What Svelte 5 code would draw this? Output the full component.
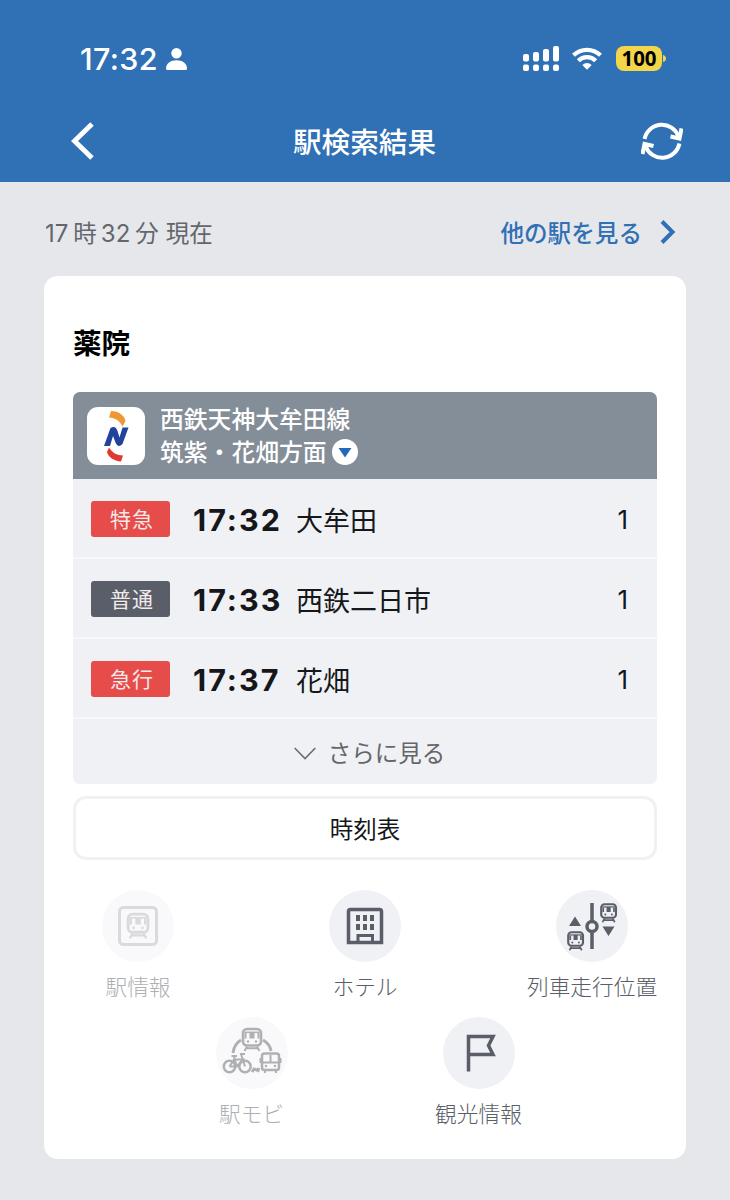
<script>
    const departures = [
        { kind: '特急', express: true, time: '17:32', dest: '大牟田', platform: '1' },
        { kind: '普通', express: false, time: '17:33', dest: '西鉄二日市', platform: '1' },
        { kind: '急行', express: true, time: '17:37', dest: '花畑', platform: '1' }
    ];

    const menu = [
        { id: 'station', label: '駅情報', disabled: true },
        { id: 'hotel', label: 'ホテル' },
        { id: 'position', label: '列車走行位置' },
        { id: 'mobi', label: '駅モビ', disabled: true },
        { id: 'sightseeing', label: '観光情報' }
    ];
</script>

{#snippet train()}
    <rect x="1.5" y="1.5" width="18" height="16.5" rx="4" fill="none" stroke="currentColor" stroke-width="2.6" />
    <path d="M3 4.800H18" stroke="currentColor" stroke-width="1.500" />
    <path d="M3 5.500h2v5.500h-2zM8 5h5v6h-5zM16 5.500h2v5.500h-2z" fill="currentColor" />
    <circle cx="6.500" cy="14" r="1.200" fill="currentColor" />
    <circle cx="14.500" cy="14" r="1.200" fill="currentColor" />
    <path d="M5.500 19 3 23.500M15.500 19 18 23.500M5 20.800h11" fill="none" stroke="currentColor" stroke-width="2" />
{/snippet}

<div class="app">
    <header>
        <div class="status">
            <div class="clock">
                <span>17:32</span>
                <svg width="21" height="22" viewBox="0 0 21 22" fill="#fff">
                    <circle cx="10.5" cy="5.2" r="5.2" />
                    <path d="M0 20.5C0 15.5 4.500 12.300 10.500 12.300S21 15.500 21 20.500Q21 22 19.500 22H1.500Q0 22 0 20.500Z" />
                </svg>
            </div>
            <div class="indicators">
                <svg width="36" height="26" viewBox="0 0 36 26" fill="#fff">
                    <rect x="0" y="8" width="6" height="7.500" rx="2" />
                    <rect x="10" y="6" width="6" height="9.500" rx="2" />
                    <rect x="20" y="3" width="6" height="12.500" rx="2" />
                    <rect x="30" y="0" width="6" height="15.500" rx="2" />
                    <rect x="0" y="18.500" width="6" height="6.500" rx="2" />
                    <rect x="10" y="18.500" width="6" height="6.500" rx="2" />
                    <rect x="20" y="18.500" width="6" height="6.500" rx="2" />
                    <rect x="30" y="18.500" width="6" height="6.500" rx="2" />
                </svg>
                <svg class="wifi" width="30" height="23" viewBox="0 0 30 23" fill="none" stroke="#fff">
                    <path d="M1.500 8.300A19.300 19.300 0 0 1 28.500 8.300" stroke-width="4.200" />
                    <path d="M6.300 13.800A12.200 12.200 0 0 1 23.700 13.800" stroke-width="4.200" />
                    <path d="M15 22.800 10.300 18Q15 14.100 19.700 18Z" fill="#fff" stroke="none" />
                </svg>
                <div class="battery">100</div>
                <svg class="tip" width="3" height="7" viewBox="0 0 3 7"><path d="M0 0Q3 1 3 3.500T0 7Z" fill="#f3d54a" /></svg>
            </div>
        </div>
        <nav>
            <svg width="24" height="38" viewBox="0 0 24 38" fill="none" stroke="#fff" stroke-width="5">
                <path d="M21 2 3.500 19 21 36" />
            </svg>
            <h1>駅検索結果</h1>
            <svg width="42" height="42" viewBox="0 0 42 42" fill="none" stroke="#fff" stroke-width="4">
                <path d="M3.600 19A17.600 17.600 0 0 1 37.500 16.500" />
                <path d="M38.400 23.500A17.600 17.600 0 0 1 4.500 26" />
                <path d="M29.500 16.500 38.500 18.500 40.500 8.500" />
                <path d="M12.500 26 3.500 24 1.500 34" />
            </svg>
        </nav>
    </header>

    <div class="info">
        <span class="now">17<i>時</i>32<i>分</i><b>現在</b></span>
        <span class="other">
            他の駅を見る
            <svg width="16" height="24" viewBox="0 0 16 24" fill="none" stroke="#3070b5" stroke-width="4">
                <path d="M2 1.500 12.500 12 2 22.500" />
            </svg>
        </span>
    </div>

    <main class="card">
        <h2>薬院</h2>
        <section class="line">
            <div class="line-head">
                <svg class="logo" width="58" height="58" viewBox="0 0 58 58">
                    <rect width="58" height="58" rx="11" fill="#fff" />
                    <path d="M24 4C32 4 38 9 38.500 14L35.500 19.500C33 13.500 28 11 22 10.500Z" fill="#ee9734" />
                    <path d="M22 40.500C25 45.500 30 48.500 36 48.500L34 54.500C27 54 21 50 20 45Z" fill="#e0392f" />
                    <path d="M17 39 23.500 21Q28.500 18 30.500 24L32.500 30.500 35.500 20.500H41.500L35.500 37Q31 41.500 28.500 35.500L26 29 23 39Z" fill="#20439b" />
                </svg>
                <div class="line-name">
                    <div>西鉄天神大牟田線</div>
                    <div class="direction">
                        筑紫・花畑方面
                        <svg width="26" height="26" viewBox="0 0 26 26">
                            <circle cx="13" cy="13" r="13" fill="#fff" />
                            <path d="M6.500 9H19.500L13 18.500Z" fill="#2468bc" />
                        </svg>
                    </div>
                </div>
            </div>
            {#each departures as train}
                <div class="row">
                    <span class="kind" class:express={train.express}>{train.kind}</span>
                    <span class="time">{train.time}</span>
                    <span class="dest">{train.dest}</span>
                    <span class="platform">{train.platform}</span>
                </div>
            {/each}
            <div class="more">
                <svg width="22" height="13" viewBox="0 0 22 13" fill="none" stroke="#6b7076" stroke-width="1.700">
                    <path d="M.7 1 11 11.500 21.300 1" />
                </svg>
                <span>さらに見る</span>
            </div>
        </section>
        <button class="timetable">時刻表</button>
        <div class="menu">
            {#each menu as item}
                <div class="item {item.id}" class:disabled={item.disabled}>
                    <svg width="72" height="72" viewBox="0 0 72 72">
                        <circle cx="36" cy="36" r="36" class="disc" />
                        {#if item.id === 'station'}
                            <rect x="17.500" y="17.500" width="37" height="37" rx="4" fill="none" stroke="currentColor" stroke-width="3" />
                            <g transform="translate(24.500 22.500) scale(1.100)">{@render train()}</g>
                        {:else if item.id === 'hotel'}
                            <path d="M19.500 52.500V21.500Q19.500 19.500 21.500 19.500H50.500Q52.500 19.500 52.500 21.500V52.500Z" fill="none" stroke="currentColor" stroke-width="3.500" />
                            <path d="M29 52V45.500H43.500V52" fill="none" stroke="currentColor" stroke-width="3" />
                            <path d="M27 25h4v6h-4zM34 25h4v6h-4zM41 25h4v6h-4zM27 34h4v6h-4zM34 34h4v6h-4zM41 34h4v6h-4z" fill="currentColor" />
                        {:else if item.id === 'position'}
                            <path d="M36 13V30M36 43V59" stroke="currentColor" stroke-width="3.500" />
                            <circle cx="36" cy="36.500" r="5" fill="none" stroke="currentColor" stroke-width="3.500" />
                            <path d="M13 36 19 26.500 25 36ZM46.500 36.500H58.500L52.500 46Z" fill="currentColor" />
                            <g transform="translate(44 13) scale(.82)">{@render train()}</g>
                            <g transform="translate(11 41) scale(.82)">{@render train()}</g>
                        {:else if item.id === 'mobi'}
                            <path d="M17 36Q18 27 25 23M47 23Q54 27 55 34" fill="none" stroke="currentColor" stroke-width="3" />
                            <path d="M36 55 38 52 42 53.500 43 51" fill="none" stroke="currentColor" stroke-width="3" />
                            <g transform="translate(25.500 10.500)">{@render train()}</g>
                            <g fill="none" stroke="currentColor" stroke-width="2">
                                <circle cx="13.500" cy="49.500" r="5.700" stroke-width="2.500" />
                                <circle cx="29" cy="49.500" r="5.700" stroke-width="2.500" />
                                <path d="M13.500 49.500 18 42.500H27L21 49.500H13.500M18.500 42 21 49.500M29 49.500 25 37H29M15.500 39H21M18.500 42 17.800 39" />
                                <rect x="46" y="36.500" width="17" height="16.500" rx="2.500" stroke-width="2.500" />
                                <path d="M46 45.500H63M54.500 38V45M49 53V56M60 53V56M44.500 41V46M64.500 41V46" stroke-width="2" />
                            </g>
                            <circle cx="50" cy="49" r="1.200" fill="currentColor" />
                            <circle cx="59" cy="49" r="1.200" fill="currentColor" />
                        {:else}
                            <path d="M25.500 54.500V19.500H50L45.500 28.500 50 37.500H25.500" fill="none" stroke="currentColor" stroke-width="3.500" />
                        {/if}
                    </svg>
                    <span>{item.label}</span>
                </div>
            {/each}
        </div>
    </main>
</div>

<style>
    :global(body) {
        margin: 0;
        background: #e6e7eb;
    }

    .app {
        box-sizing: border-box;
        height: 1200px;
        overflow: hidden;
        background: #e6e7eb;
        font-family: 'Inter', 'Noto Sans CJK JP', sans-serif;
        color: #15171a;
    }

    svg {
        display: block;
        flex: none;
    }

    header {
        height: 182px;
        background: #3070b5;
        color: #fff;
    }

    .status {
        display: flex;
        justify-content: space-between;
        height: 99px;
        padding: 18px 64px 0 80px;
        box-sizing: border-box;
        align-items: center;
    }

    .clock,
    .indicators,
    .info,
    .other,
    .direction,
    .line-head,
    .row,
    .more {
        display: flex;
        align-items: center;
    }

    .clock {
        gap: 8px;
        font-size: 30.5px;
        font-weight: 500;
        letter-spacing: 0.3px;
        line-height: 36px;
    }

    .wifi {
        margin: 0 14px 0 13px;
    }

    .battery {
        width: 46px;
        height: 25px;
        border-radius: 8px;
        background: #f3d54a;
        color: #000;
        font: 700 20.5px/25px 'Noto Sans', sans-serif;
        text-align: center;
    }

    .tip {
        margin-left: 1px;
    }

    nav {
        display: flex;
        align-items: center;
        justify-content: space-between;
        height: 83px;
        padding: 0 47px 0 71px;
    }

    h1 {
        margin: 4px 7px 0 0;
        font-size: 28.6px;
        font-weight: 500;
        line-height: 40px;
    }

    .info {
        justify-content: space-between;
        height: 94px;
        padding: 7px 54px 0 45px;
        box-sizing: border-box;
        font-size: 24px;
    }

    .now {
        margin-top: -2px;
        color: #63666b;
    }

    .now i,
    .now b {
        font-size: 23.5px;
        font-style: normal;
        font-weight: 400;
    }

    .now i {
        margin: 0 4px 0 5px;
    }

    .now b {
        margin-left: 3px;
    }

    .other {
        gap: 18px;
        margin-top: -1px;
        color: #3070b5;
        font-size: 23.6px;
        font-weight: 500;
    }

    .card {
        height: 883px;
        margin: 0 44px;
        padding: 48px 29px 0;
        box-sizing: border-box;
        border-radius: 14px;
        background: #fff;
    }

    h2 {
        margin: 0;
        height: 68px;
        font-size: 28.6px;
        font-weight: 700;
        line-height: 40px;
        color: #000;
    }

    .line {
        height: 392px;
        border-radius: 7px;
        overflow: hidden;
        background: #f0f1f5;
    }

    .line-head {
        height: 87px;
        padding: 0 14px;
        gap: 15px;
        background: #848e98;
        color: #fff;
        font-size: 23.8px;
        font-weight: 500;
        line-height: 33px;
    }

    .direction {
        gap: 5px;
    }

    .row {
        height: 80px;
        padding: 2px 29px 0 18px;
        box-sizing: border-box;
        border-bottom: 2px solid #f7f8fa;
    }

    .kind {
        width: 79px;
        height: 36px;
        border-radius: 3px;
        background: #595e68;
        color: #f1e9ea;
        font-size: 21px;
        letter-spacing: 1px;
        line-height: 37px;
        text-align: center;
        text-indent: 3px;
    }

    .kind.express {
        background: #e64c49;
    }

    .time {
        width: 103px;
        margin: 1px 0 0 23px;
        font-size: 30.5px;
        font-weight: 700;
        letter-spacing: 2px;
    }

    .dest {
        flex: 1;
        font-size: 27px;
    }

    .platform {
        font-size: 26px;
    }

    .more {
        height: 65px;
        justify-content: center;
        gap: 12px;
        padding-left: 9px;
        color: #63666b;
        font-size: 23.5px;
    }

    .more svg {
        margin-top: 4px;
    }

    .timetable {
        display: block;
        width: 100%;
        height: 64px;
        margin: 12px 0 30px;
        padding: 0;
        border: 3px solid #f0f1f3;
        border-radius: 13px;
        background: #fff;
        color: #15171a;
        font-family: inherit;
        font-size: 23.5px;
    }

    .menu {
        display: flex;
        flex-wrap: wrap;
        justify-content: center;
        gap: 14px 97px;
    }

    .item {
        display: flex;
        flex-direction: column;
        align-items: center;
        width: 130px;
        height: 113px;
        color: #595e68;
        white-space: nowrap;
        font-size: 21.7px;
        font-weight: 300;
    }

    .item span {
        margin-top: 9px;
        line-height: 32px;
    }

    .disc {
        fill: #f0f1f5;
    }

    .disabled {
        color: #aeb0b3;
    }

    .disabled .disc {
        fill: #f9f9fb;
    }

    .station svg {
        color: #d9dadc;
    }
</style>
